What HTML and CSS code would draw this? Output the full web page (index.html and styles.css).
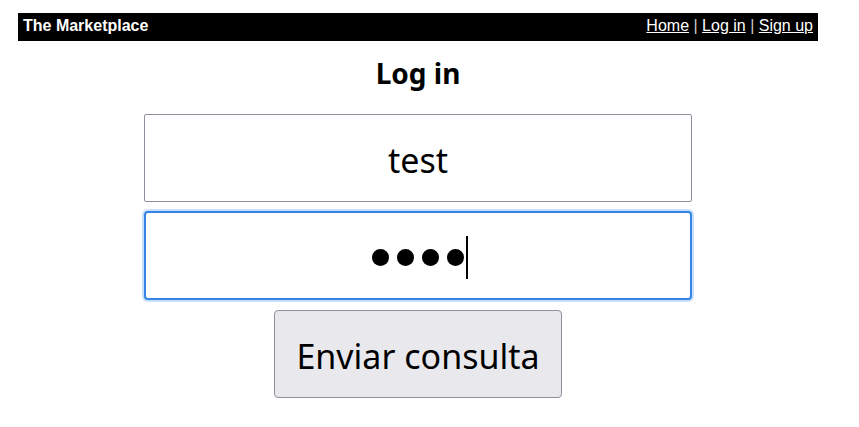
FILE: index.html
```html
<!DOCTYPE html>
<html>
<head>
<meta charset="utf-8">
<link rel="stylesheet" href="styles.css">
</head>
<body>
<div class="page">
  <div class="header">
    <span class="brand">The Marketplace</span>
    <span class="nav"><a href="#">Home</a> | <a href="#">Log in</a> | <a href="#">Sign up</a></span>
  </div>
  <h1 class="title">Log in</h1>
  <form class="form">
    <input class="field" type="text" value="test">
    <div class="field focused" role="textbox" aria-label="password">
      <span class="dots"><span class="dot"></span><span class="dot"></span><span class="dot"></span><span class="dot"></span></span><span class="caret"></span>
    </div>
    <button class="submit" type="button">Enviar consulta</button>
  </form>
</div>
</body>
</html>
```

FILE: styles.css
```css
html, body { margin: 0; padding: 0; background: #fff; }
body { padding: 13px 0 0 18px; }
.page { width: 800px; }
.header {
  background: #000;
  color: #fff;
  height: 28px;
  box-sizing: border-box;
  display: flex;
  justify-content: space-between;
  align-items: flex-start;
  padding: 4px 5px 0;
  font-family: "Liberation Sans", Arial, sans-serif;
  font-size: 16px;
}
.brand { font-weight: bold; }
.nav a { color: #fff; }
.nav { color: #ccc; }
.title {
  margin: 13px 0 0;
  text-align: center;
  font-family: "Noto Sans", sans-serif;
  font-weight: bold;
  font-size: 28px;
  line-height: 38px;
}
.form {
  display: flex;
  flex-direction: column;
  align-items: center;
  gap: 9px;
  margin-top: 22px;
}
.field {
  box-sizing: border-box;
  width: 548px;
  height: 88px;
  border: 1px solid #8f8f9d;
  border-radius: 2px;
  text-align: center;
  font-family: "Noto Sans", sans-serif;
  font-size: 34px;
  color: #000;
  background: #fff;
  outline: none;
  padding: 4px 0 0;
}
.field.focused {
  border: 2px solid #3584e4;
  box-shadow: 0 0 0 2px #c6e0fb;
  border-radius: 4px;
  height: 89px;
  display: flex;
  justify-content: center;
  align-items: center;
  padding: 3px 0 0 4px;
}
.dots { display: flex; gap: 8px; }
.dot {
  width: 17px;
  height: 17px;
  border-radius: 50%;
  background: #000;
}
.caret {
  width: 2px;
  height: 43px;
  background: #000;
  margin-left: 2px;
}
.submit {
  box-sizing: border-box;
  width: 288px;
  height: 88px;
  margin-top: 1px;
  background: #e9e9ed;
  border: 1px solid #8f8f9d;
  border-radius: 4px;
  font-family: "Noto Sans", sans-serif;
  font-size: 34px;
  color: #000;
  padding: 4px 0 0;
}
```
